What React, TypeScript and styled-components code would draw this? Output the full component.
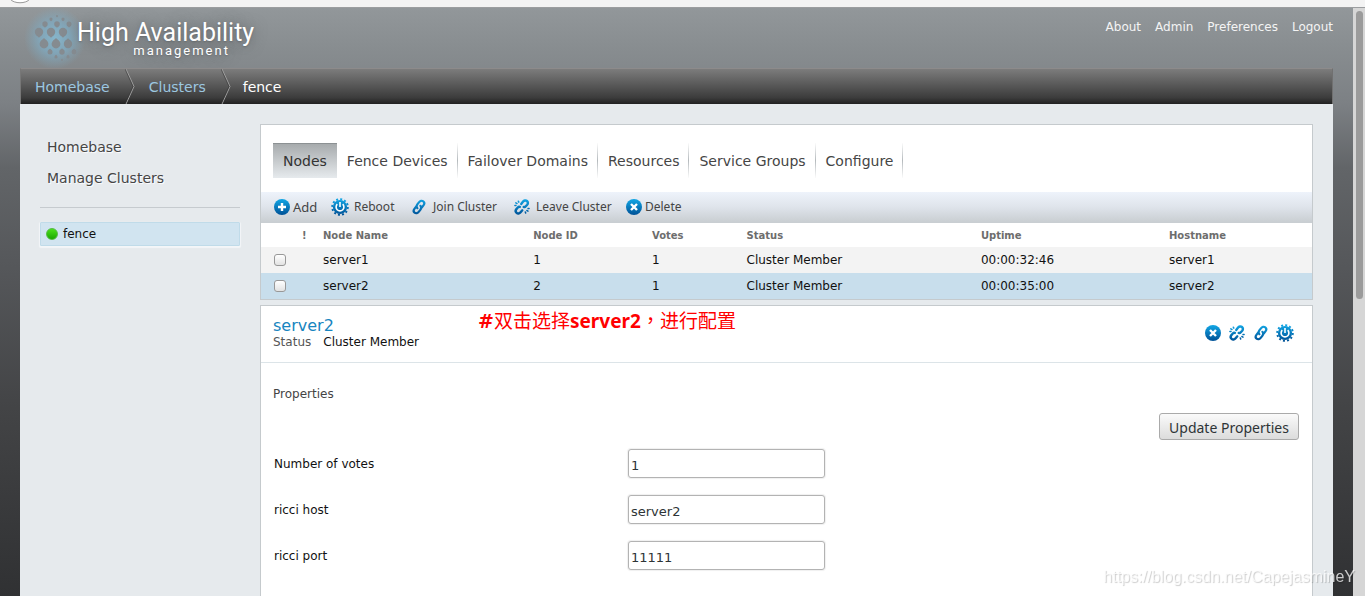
import React, { useId, useState } from "react";
import styled, { createGlobalStyle, css } from "styled-components";

const GlobalStyle = createGlobalStyle`
  * { box-sizing: border-box; }
  html, body { margin: 0; }
  body {
    font-family: "DejaVu Sans", "Noto Sans CJK SC", sans-serif;
    font-size: 12px;
    color: #111;
    background: #3a3b3d;
  }
  h1, h2, p, form { margin: 0; font-weight: normal; }
  a { text-decoration: none; color: inherit; }
  button { font: inherit; color: inherit; border: 0; padding: 0; background: none; cursor: pointer; }
`;

const Window = styled.div`
  display: flex;
  flex-direction: column;
  height: 100vh;
  overflow: hidden;
`;
const BrowserEdge = styled.div`
  display: flex;
  flex: none;
  height: 8px;
  padding-left: 9px;
  background: #f3f3f3;
  border-bottom: 1px solid #9b9d9f;
`;
const Viewport = styled.div`
  display: flex;
  flex: 1;
  min-height: 0;
`;
const Page = styled.div`
  display: flex;
  flex-direction: column;
  flex: 1;
  min-width: 0;
  padding: 0 20px;
  background: linear-gradient(#92979a 0, #888d90 40px, #7c8084 96px, #626568 160px, #55575a 260px, #434446 400px, #303133 588px);
`;
const ScrollTrack = styled.div`
  flex: none;
  width: 12px;
  padding: 3px 2px 0 3px;
  background: #d6d6d6;
`;
const ScrollThumb = styled.div`
  height: 288px;
  border-radius: 4px;
  background: #9b9b9b;
`;
const Header = styled.header`
  display: flex;
  justify-content: space-between;
  flex: none;
  height: 60px;
`;
const Brand = styled.a`
  display: flex;
  color: #fff;
`;
const BrandName = styled.h1`
  display: flex;
  flex-direction: column;
  align-items: center;
  padding-top: 13px;
  font-family: Roboto, "Noto Sans", sans-serif;
  text-shadow: 0 0 14px #5c6064, 0 1px 2px #6c7074;
`;
const BrandTitle = styled.span`
  font-size: 25px;
  line-height: 24px;
`;
const BrandSub = styled.span`
  padding-left: 32px;
  font-size: 13px;
  line-height: 12px;
  letter-spacing: 2px;
`;
const UserNav = styled.nav`
  display: flex;
  gap: 14px;
  padding-top: 11px;
  line-height: 16px;
  color: #f4f4f4;
`;
const Crumbs = styled.nav`
  display: flex;
  flex: none;
  height: 36px;
  border-top: 1px solid #8d8b8b;
  border-left: 1px solid #777;
  border-right: 1px solid #707070;
  background: linear-gradient(#7c7c7c, #3c3c3c 82%, #212121);
  font-size: 14px;
  line-height: 36px;
  color: #fff;
`;
const Crumb = styled.a`
  display: flex;
  padding-left: 14px;
  color: #9cc7e0;
  svg { margin-left: 15px; }
`;
const CurrentCrumb = styled.span`
  padding-left: 12px;
`;
const Body = styled.div`
  display: flex;
  flex: 1;
  min-height: 0;
  gap: 20px;
  padding: 20px 20px 0;
  background: #e6eaed;
`;
const Sidebar = styled.aside`
  flex: none;
  width: 200px;
`;
const SideNav = styled.nav`
  display: flex;
  flex-direction: column;
  padding: 8px 7px 13px;
  border-bottom: 1px solid #c6cbcf;
  font-size: 14px;
  line-height: 31px;
  color: #454545;
  text-shadow: 1px 1px 1px #fff;
`;
const ClusterLink = styled.a`
  display: flex;
  align-items: center;
  gap: 5px;
  height: 24px;
  margin-top: 14px;
  padding-left: 5px;
  border: 1px solid #c0dbe9;
  border-radius: 1px;
  background: #d1e4f0;
  box-shadow: 0 1px 1px 1px #f3f6f8;
`;
const StatusDot = styled.span`
  width: 12px;
  height: 12px;
  border: 1px solid #55bb44;
  border-radius: 6px;
  background: linear-gradient(#4be01b, #1aa800);
`;
const Main = styled.main`
  display: flex;
  flex-direction: column;
  flex: 1;
  min-width: 0;
  gap: 5px;
`;
const Panel = styled.section<{ $grow?: boolean }>`
  background: #fff;
  border: 1px solid #c5cacd;
  ${(p) => p.$grow && css`flex: 1; border-bottom: 0;`}
`;
const Tabs = styled.nav`
  display: flex;
  padding: 18px 12px 14px;
`;
const Tab = styled.a<{ $active?: boolean }>`
  height: 35px;
  padding: 0 9px 0 10px;
  font-size: 14px;
  line-height: 36px;
  color: #454545;
  border-right: 1px solid;
  border-image: linear-gradient(#fff, #b5babd 50%, #fff) 1;
  ${(p) => p.$active && css`
    padding: 0 10px;
    color: #333;
    border: 0;
    border-top: 1px solid #8c9193;
    background: linear-gradient(#a7abad, #e6eaed);
    line-height: 34px;
  `}
`;
const Toolbar = styled.div`
  display: flex;
  align-items: center;
  height: 31px;
  padding-left: 12px;
  background: linear-gradient(#eef3fb, #dfe4eb 50%, #c9ced2);
  border-bottom: 1px solid #c9ced2;
`;
const ToolButton = styled.button<{ $width: number; $large?: boolean; $tight?: boolean }>`
  display: flex;
  align-items: center;
  gap: ${(p) => (p.$tight ? 2 : 5)}px;
  width: ${(p) => p.$width}px;
  font-family: "Noto Sans", sans-serif;
  font-size: ${(p) => (p.$large ? 13 : 12)}px;
  line-height: 18px;
  white-space: nowrap;
  color: #444;
  svg { flex: none; }
`;
const Table = styled.table`
  width: 100%;
  table-layout: fixed;
  border-collapse: collapse;
  text-align: left;
`;
const Head = styled.th`
  height: 24px;
  padding: 0;
  font-size: 10px;
  color: #6d6d6d;
`;
const Row = styled.tr<{ $selected?: boolean }>`
  height: 26px;
  background: ${(p) => (p.$selected ? "#c8deec" : "#f3f3f3")};
`;
const Cell = styled.td`
  padding: 0;
`;
const CheckCell = styled.td`
  padding: 0 0 0 13px;
`;
const Check = styled.input`
  display: block;
  appearance: none;
  width: 12px;
  height: 12px;
  margin: 0;
  border: 1px solid #989898;
  border-radius: 3px;
  background: linear-gradient(#fff, #e2e2e2);
  &:checked { background: #2581b8; }
`;
const DetailHead = styled.header`
  display: flex;
  align-items: flex-start;
  justify-content: space-between;
  height: 57px;
  padding: 0 18px 0 12px;
  border-bottom: 1px solid #dce4e8;
`;
const DetailTitle = styled.div`
  width: 205px;
  padding-top: 10px;
`;
const NodeTitle = styled.h2`
  font-size: 16px;
  line-height: 19px;
  color: #1785c0;
`;
const StatusLine = styled.p`
  display: flex;
  gap: 12px;
  line-height: 14px;
`;
const Muted = styled.span`
  color: #555;
`;
const Note = styled.p`
  flex: 1;
  font-size: 19px;
  line-height: 30px;
  color: #f00;
  font-family: "DejaVu Sans", "Noto Sans CJK TC", sans-serif;
`;
const NoteName = styled.b`
  font-family: "Noto Sans", sans-serif;
`;
const Actions = styled.div`
  display: flex;
  gap: 6px;
  padding-top: 18px;
`;
const IconButton = styled.button`
  display: flex;
`;
const Form = styled.form`
  display: flex;
  flex-direction: column;
  padding: 22px 13px 0 12px;
`;
const FormTitle = styled.h2`
  font-size: 12px;
  line-height: 18px;
  color: #444;
`;
const UpdateButton = styled.button`
  align-self: flex-end;
  width: 140px;
  height: 27px;
  margin: 10px 0 9px;
  padding-top: 2px;
  border: 1px solid #aaa;
  border-radius: 3px;
  background: linear-gradient(#fafafa, #dcdcdc);
  font-family: "Noto Sans", sans-serif;
  font-size: 14px;
  color: #2e3436;
`;
const Field = styled.div`
  display: grid;
  grid-template-columns: 354px 197px;
  align-items: center;
  height: 29px;
  margin-bottom: 17px;
  padding-left: 1px;
`;
const TextBox = styled.input`
  width: 100%;
  height: 29px;
  padding: 4px 2px 0;
  border: 1px solid #b3b3b3;
  border-radius: 3px;
  box-shadow: 0 0 1px 1px #f0f0f0;
  background: #fff;
  font-family: "DejaVu Sans", sans-serif;
  font-size: 13px;
  color: #2e3436;
`;
const Watermark = styled.div`
  position: fixed;
  right: 10px;
  bottom: 10px;
  font-family: "Liberation Sans", sans-serif;
  font-size: 16px;
  line-height: 18px;
  color: rgba(255, 255, 255, 0.75);
  text-shadow: 1px 1px 1px rgba(0, 0, 0, 0.2);
`;

type IconKind = "add" | "power" | "link" | "unlink" | "delete";

function Icon({ kind }: { kind: IconKind }) {
  const id = useId();
  const blue = `url(#${id})`;
  return (
    <svg width="18" height="18" viewBox="0 0 18 18" aria-hidden="true">
      <defs>
        <linearGradient id={id} x1="0" y1="0" x2="0" y2="18" gradientUnits="userSpaceOnUse">
          <stop offset="0.1" stopColor="#11a3e2" />
          <stop offset="0.9" stopColor="#00559a" />
        </linearGradient>
      </defs>
      {(kind === "add" || kind === "delete") && <circle cx="9" cy="9" r="8" fill={blue} />}
      {kind === "add" && <path d="M9 5v8M5 9h8" stroke="#fff" strokeWidth="2.4" />}
      {kind === "delete" && <path d="M6 6l6 6M12 6l-6 6" stroke="#fff" strokeWidth="2.4" />}
      {kind === "power" && (
        <g fill="none" stroke={blue}>
          <circle cx="9" cy="9" r="7.8" strokeWidth="2" strokeDasharray="2 2.08" />
          <circle cx="9" cy="9" r="7.1" fill={blue} stroke="none" />
          <path d="M6.3 6.2a3.9 3.9 0 1 0 5.4 0M9 4v5" stroke="#fff" strokeWidth="1.6" />
        </g>
      )}
      {kind === "link" && (
        <g fill="none" stroke={blue} strokeWidth="2.2" strokeLinecap="round">
          <path d="M7.4 10.2C6.3 9.1 6.4 7.6 7.3 6.4L8.9 4.3C10.1 2.7 12 2.3 13.3 3.3C14.6 4.3 14.6 5.8 13.6 7.2L12.1 9.2" />
          <path d="M10.4 7.8C11.5 8.9 11.4 10.4 10.5 11.6L8.9 13.7C7.7 15.3 5.9 15.7 4.6 14.7C3.3 13.7 3.4 12.2 4.4 10.8L5.9 8.8" />
        </g>
      )}
      {kind === "unlink" && (
        <g fill="none" stroke={blue} strokeLinecap="round">
          <path d="M8.2 5.9L9.9 3.8C11 2.4 12.8 2 14 3C15.2 4 15.2 5.5 14.2 6.7L12.8 8.3C12.2 9 11.4 9.2 10.7 8.9" strokeWidth="2.4" />
          <path d="M9.3 12.3L7.6 14.3C6.5 15.7 4.8 15.9 3.6 14.9C2.4 13.9 2.4 12.4 3.4 11.1L4.8 9.5C5.4 8.8 6.2 8.6 6.9 8.9" strokeWidth="2.4" />
          <path d="M5.3 3.2l.5 1M2.8 4.9l1.2.6M1.9 7.4h1.1M12.3 14l.4 1.1M13.9 12.5l1.1.7M15 10.5h1.1" strokeWidth="1.5" />
        </g>
      )}
    </svg>
  );
}

const drops: [number, number, number][] = [
  [37, 8, 0.9], [31, 11, 1.6], [43, 11, 1.6],
  [25, 16, 2.7], [37, 16, 2.8], [49, 16, 2.5],
  [19, 24, 4.2], [31, 24, 4.2], [43, 24, 4.2],
  [24, 36, 4.4], [36, 36, 4.4], [48, 36, 4.2],
  [30, 44, 2.5], [42, 44, 2.7], [54, 44, 2.4],
  [36, 49, 1.6], [48, 49, 1.6], [42, 52, 0.9],
];

function Logo() {
  return (
    <svg width="57" height="60" viewBox="0 0 57 60" overflow="visible" aria-hidden="true">
      <defs>
        <radialGradient id="logo-glow">
          <stop offset="0" stopColor="#86b5ca" />
          <stop offset="0.5" stopColor="#80aac0" stopOpacity="0.8" />
          <stop offset="1" stopColor="#80a5b8" stopOpacity="0" />
        </radialGradient>
      </defs>
      <circle cx="35" cy="30" r="31" fill="url(#logo-glow)" />
      {drops.map(([x, y, r], i) => {
        const tip = y > 30 ? -1.35 : 1.35;
        return (
          <g key={i} fill="#858b90">
            <circle cx={x} cy={y} r={r} />
            <path d={`M${x - r * 0.8} ${y + tip * r * 0.44}L${x} ${y + tip * r}L${x + r * 0.8} ${y + tip * r * 0.44}Z`} />
          </g>
        );
      })}
    </svg>
  );
}

function Chevron() {
  return (
    <svg width="10" height="35" viewBox="0 0 10 35" fill="none" aria-hidden="true">
      <path d="M1 0L9 17.5L1 35" stroke="#a0a0a0" />
      <path d="M0 0L8 17.5L0 35" stroke="#333" strokeOpacity="0.5" />
    </svg>
  );
}

const tabs = ["Nodes", "Fence Devices", "Failover Domains", "Resources", "Service Groups", "Configure"];
const tools: { label: string; icon: IconKind; width: number; tight?: boolean }[] = [
  { label: "Add", icon: "add", width: 58, tight: true },
  { label: "Reboot", icon: "power", width: 79 },
  { label: "Join Cluster", icon: "link", width: 103 },
  { label: "Leave Cluster", icon: "unlink", width: 112 },
  { label: "Delete", icon: "delete", width: 60, tight: true },
];
const nodes = [
  { name: "server1", id: 1, votes: 1, status: "Cluster Member", uptime: "00:00:32:46" },
  { name: "server2", id: 2, votes: 1, status: "Cluster Member", uptime: "00:00:35:00" },
];
const actions: { icon: IconKind; label: string }[] = [
  { icon: "delete", label: "Delete" },
  { icon: "unlink", label: "Leave Cluster" },
  { icon: "link", label: "Join Cluster" },
  { icon: "power", label: "Reboot" },
];
const fields = [
  { id: "votes", label: "Number of votes", value: "1" },
  { id: "host", label: "ricci host", value: "server2" },
  { id: "port", label: "ricci port", value: "11111" },
];

export default function App() {
  const [values, setValues] = useState<Record<string, string>>(
    Object.fromEntries(fields.map((f) => [f.id, f.value])),
  );
  return (
    <Window>
      <GlobalStyle />
      <BrowserEdge>
        <svg width="22" height="4" viewBox="0 0 22 4" aria-hidden="true">
          <path d="M1 -1C5 4 17 4 21 -1" fill="#fff" stroke="#999" />
        </svg>
      </BrowserEdge>
      <Viewport>
        <Page>
          <Header>
            <Brand href="#">
              <Logo />
              <BrandName>
                <BrandTitle>High Availability</BrandTitle>
                <BrandSub>management</BrandSub>
              </BrandName>
            </Brand>
            <UserNav>
              {["About", "Admin", "Preferences", "Logout"].map((t) => <a key={t} href="#">{t}</a>)}
            </UserNav>
          </Header>
          <Crumbs>
            <Crumb href="#">Homebase<Chevron /></Crumb>
            <Crumb href="#">Clusters<Chevron /></Crumb>
            <CurrentCrumb>fence</CurrentCrumb>
          </Crumbs>
          <Body>
            <Sidebar>
              <SideNav>
                <a href="#">Homebase</a>
                <a href="#">Manage Clusters</a>
              </SideNav>
              <ClusterLink href="#"><StatusDot />fence</ClusterLink>
            </Sidebar>
            <Main>
              <Panel>
                <Tabs>
                  {tabs.map((t, i) => <Tab key={t} href="#" $active={i === 0}>{t}</Tab>)}
                </Tabs>
                <Toolbar>
                  {tools.map((t, i) => (
                    <ToolButton key={t.label} type="button" $width={t.width} $large={i === 0} $tight={t.tight}>
                      <Icon kind={t.icon} />{t.label}
                    </ToolButton>
                  ))}
                </Toolbar>
                <Table>
                  <colgroup>
                    <col style={{ width: "3.9%" }} />
                    <col style={{ width: "2%" }} />
                    <col style={{ width: "20%" }} />
                    <col style={{ width: "11.3%" }} />
                    <col style={{ width: "9%" }} />
                    <col style={{ width: "22.3%" }} />
                    <col style={{ width: "17.9%" }} />
                    <col />
                  </colgroup>
                  <thead>
                    <tr>
                      {["", "!", "Node Name", "Node ID", "Votes", "Status", "Uptime", "Hostname"].map((h) => (
                        <Head key={h} scope="col">{h}</Head>
                      ))}
                    </tr>
                  </thead>
                  <tbody>
                    {nodes.map((n) => (
                      <Row key={n.name} $selected={n.name === "server2"}>
                        <CheckCell><Check type="checkbox" aria-label={n.name} /></CheckCell>
                        <Cell />
                        <Cell>{n.name}</Cell>
                        <Cell>{n.id}</Cell>
                        <Cell>{n.votes}</Cell>
                        <Cell>{n.status}</Cell>
                        <Cell>{n.uptime}</Cell>
                        <Cell>{n.name}</Cell>
                      </Row>
                    ))}
                  </tbody>
                </Table>
              </Panel>
              <Panel $grow>
                <DetailHead>
                  <DetailTitle>
                    <NodeTitle>server2</NodeTitle>
                    <StatusLine><Muted>Status</Muted><span>Cluster Member</span></StatusLine>
                  </DetailTitle>
                  <Note><b>#</b>双击选择<NoteName>server2</NoteName>，进行配置</Note>
                  <Actions>
                    {actions.map((a) => (
                      <IconButton key={a.icon} type="button" aria-label={a.label}><Icon kind={a.icon} /></IconButton>
                    ))}
                  </Actions>
                </DetailHead>
                <Form onSubmit={(e) => e.preventDefault()}>
                  <FormTitle>Properties</FormTitle>
                  <UpdateButton type="submit">Update Properties</UpdateButton>
                  {fields.map((f) => (
                    <Field key={f.id}>
                      <label htmlFor={f.id}>{f.label}</label>
                      <TextBox
                        id={f.id}
                        value={values[f.id]}
                        onChange={(e) => setValues({ ...values, [f.id]: e.target.value })}
                      />
                    </Field>
                  ))}
                </Form>
              </Panel>
            </Main>
          </Body>
        </Page>
        <ScrollTrack><ScrollThumb /></ScrollTrack>
      </Viewport>
      <Watermark>https://blog.csdn.net/CapejasmineY</Watermark>
    </Window>
  );
}
